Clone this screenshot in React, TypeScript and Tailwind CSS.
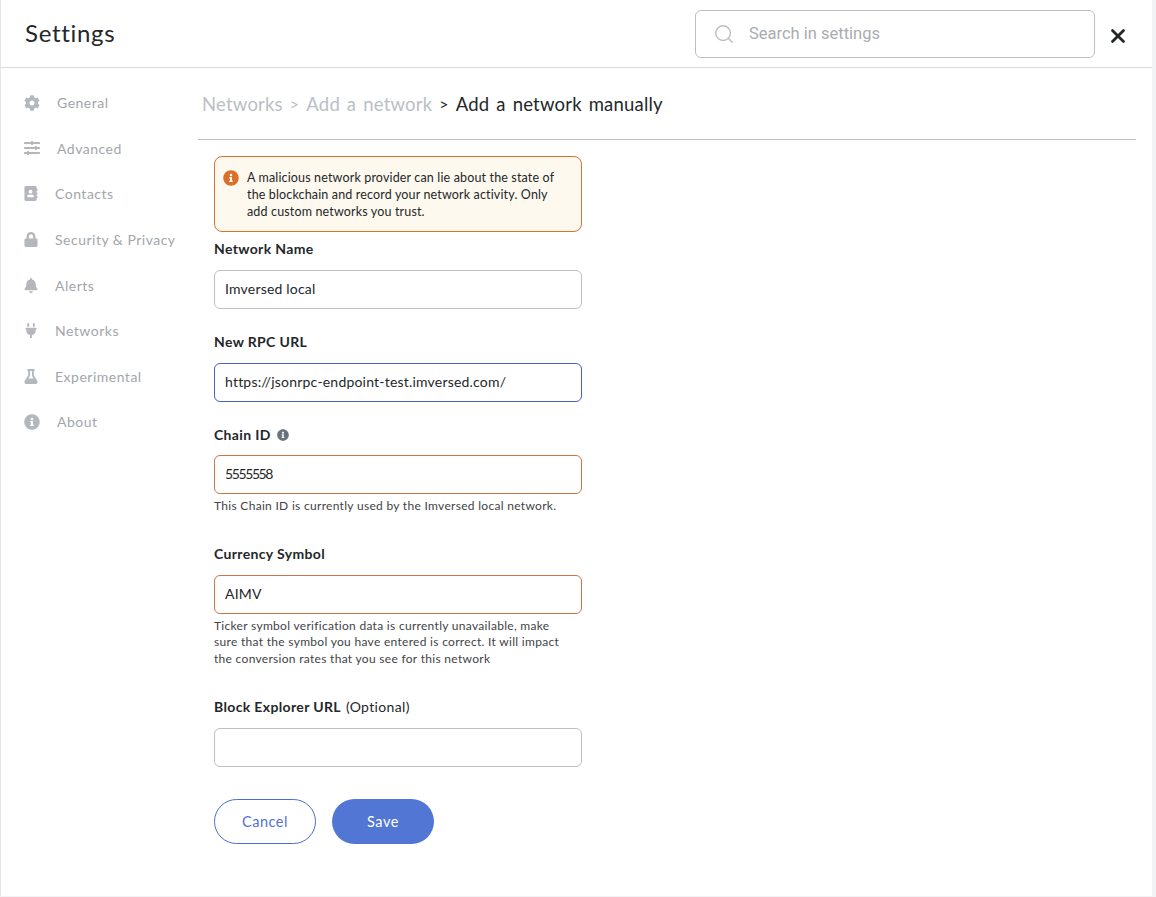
import { Search, X } from "lucide-react";
import {
  FaAddressBook,
  FaBell,
  FaCog,
  FaFlask,
  FaInfoCircle,
  FaLock,
  FaPlug,
  FaSlidersH,
} from "react-icons/fa";
import type { ReactNode } from "react";

const navItems = [
  { label: "General", icon: <FaCog size={16} />, width: "w-[16px]", gap: "gap-[17px]" },
  { label: "Advanced", icon: <FaSlidersH size={16} />, width: "w-[16px]", gap: "gap-[17px]" },
  { label: "Contacts", icon: <FaAddressBook size={15} />, width: "w-[14px]", gap: "gap-[17px]" },
  { label: "Security & Privacy", icon: <FaLock size={15} />, width: "w-[14px]", gap: "gap-[17px]" },
  { label: "Alerts", icon: <FaBell size={15} />, width: "w-[14px]", gap: "gap-[17px]" },
  { label: "Networks", icon: <FaPlug size={15} />, width: "w-[14px]", gap: "gap-[17px]" },
  { label: "Experimental", icon: <FaFlask size={15} />, width: "w-[14px]", gap: "gap-[17px]" },
  { label: "About", icon: <FaInfoCircle size={16} />, width: "w-[16px]", gap: "gap-[17px]" },
];

function Field({
  label,
  value,
  tone,
  className,
  inputClass = "mt-[11px] tracking-[0.2px]",
  children,
}: {
  label: ReactNode;
  value?: string;
  tone: string;
  className: string;
  inputClass?: string;
  children?: ReactNode;
}) {
  return (
    <div className={className}>
      <div className="h-[20px] text-[14px] leading-[20px] font-bold tracking-[0.35px] text-[#24272a] flex items-center">
        {label}
      </div>
      <div
        className={`h-[39px] w-[368px] rounded-[6px] border bg-white px-[10px] text-[14px] leading-[36px] text-[#24272a] ${inputClass} ${tone}`}
      >
        {value}
      </div>
      {children}
    </div>
  );
}

export default function App() {
  return (
    <div
      className="w-[1156px] h-[897px] bg-[#f2f3f4] overflow-hidden"
      style={{ fontFamily: '"Lato", "Liberation Sans", sans-serif' }}
    >
      <div className="w-[1152px] h-[896px] bg-white border-l border-[#e4e5e7]">
        <header className="h-[68px] border-b border-[#d9dadc] flex items-center pl-[24px]">
          <h1 className="text-[24px] tracking-[0.7px] text-[#24272a] leading-[32px] -mt-[1px]">Settings</h1>
          <div className="ml-auto w-[400px] h-[48px] rounded-[6px] border border-[#bbc0c5] flex items-center pl-[17px] gap-[14px]">
            <Search size={22} strokeWidth={1.6} className="text-[#bbc0c5]" />
            <span
              className="text-[16.5px] text-[#a9adb2] mt-[2px]"
              style={{ fontFamily: "Roboto, sans-serif" }}
            >
              Search in settings
            </span>
          </div>
          <button className="ml-[12px] mr-[23px] mt-[4px] text-[#24272a]" aria-label="Close">
            <X size={22} strokeWidth={3} />
          </button>
        </header>

        <div className="flex">
          <nav className="w-[197px] shrink-0 pl-[23px] pt-[12px]">
            {navItems.map((item) => (
              <div
                key={item.label}
                className={`h-[45.6px] flex items-center text-[14px] tracking-[0.5px] text-[#a2a6ab] ${item.gap}`}
              >
                <span className={`${item.width} flex justify-center text-[#b4b7bc]`}>{item.icon}</span>
                <span>{item.label}</span>
              </div>
            ))}
          </nav>

          <main className="w-[938px]">
            <div className="h-[72px] border-b border-[#bbc0c5] pl-[4px] pt-[23px] flex items-start gap-[7px] text-[18.5px] leading-[26px] tracking-[0.2px] [word-spacing:2px] text-[#bbc0c5]">
              <span>Networks</span>
              <span className="text-[16px]">&gt;</span>
              <span>Add a network</span>
              <span className="text-[16px] text-[#24272a]">&gt;</span>
              <span className="text-[#24272a]">Add a network manually</span>
            </div>

            <div className="pl-[16px] pt-[16px]">
              <div className="w-[368px] h-[76px] rounded-[8px] border border-[#d9732f] bg-[#fef9ef] flex pl-[8px] pt-[12px] gap-[8px]">
                <FaInfoCircle size={16} className="text-[#d8702c] shrink-0 mt-[1px]" />
                <p className="w-[320px] text-[12.5px] leading-[17px] tracking-[0.15px] text-[#24272a]">
                  A malicious network provider can lie about the state of the blockchain and record your network activity. Only add custom networks you trust.
                </p>
              </div>

              <Field label="Network Name" value="Imversed local" tone="border-[#bbc0c5]" className="mt-[7px]" />
              <Field
                label="New RPC URL"
                value="https://jsonrpc-endpoint-test.imversed.com/"
                tone="border-[#4a5fc1]"
                className="mt-[23px]"
              />
              <Field
                label={
                  <>
                    Chain ID
                    <FaInfoCircle size={12} className="ml-[6px] text-[#6a737d]" />
                  </>
                }
                value="5555558"
                tone="border-[#c9754a]"
                className="mt-[23px]"
                inputClass="mt-[10px] tracking-[-1.4px]"
              >
                <p className="mt-[4px] text-[12px] leading-[16px] tracking-[0.3px] text-[#3f4347]">
                  This Chain ID is currently used by the Imversed local network.
                </p>
              </Field>
              <Field
                label="Currency Symbol"
                value="AIMV"
                tone="border-[#c9754a]"
                className="mt-[30px]"
              >
                <p className="mt-[4px] w-[355px] text-[12px] leading-[16.4px] tracking-[0.3px] text-[#3f4347]">
                  Ticker symbol verification data is currently unavailable, make sure that the symbol you have entered is correct. It will impact the conversion rates that you see for this network
                </p>
              </Field>
              <Field
                label={
                  <>
                    Block Explorer URL
                    <span className="ml-[5px] font-normal">(Optional)</span>
                  </>
                }
                tone="border-[#bbc0c5]"
                className="mt-[30px]"
              />

              <div className="mt-[32px] flex gap-[16px]">
                <button className="w-[102px] h-[45px] rounded-full border border-[#4a6fd0] text-[14.5px] tracking-[0.5px] text-[#5470d3]">
                  Cancel
                </button>
                <button className="w-[102px] h-[45px] rounded-full bg-[#5176d3] text-[14.5px] tracking-[0.5px] text-white">
                  Save
                </button>
              </div>
            </div>
          </main>
        </div>
      </div>
    </div>
  );
}
